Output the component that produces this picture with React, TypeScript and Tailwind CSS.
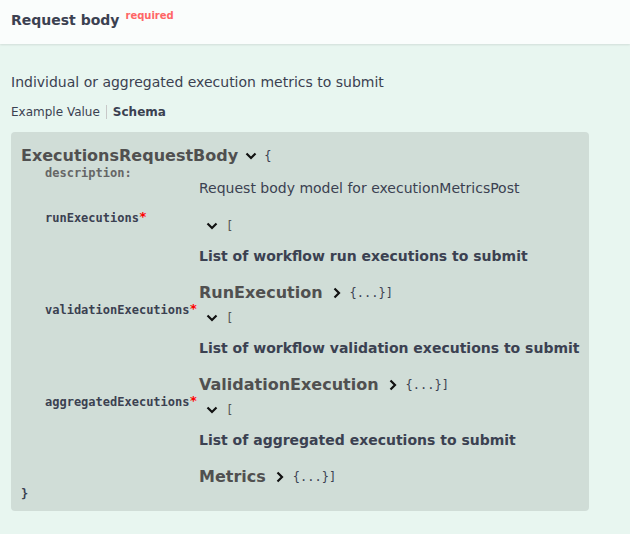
import React from 'react';

const sans = "font-['DejaVu_Sans',sans-serif]";
const mono = "font-['DejaVu_Sans_Mono',monospace]";

const ChevronDown = () => (
  <svg width="12" height="8" viewBox="0 0 12 8" className="inline-block">
    <polyline points="1.5,1.5 6,6 10.5,1.5" fill="none" stroke="#111" strokeWidth="2.2" />
  </svg>
);

const ChevronRight = () => (
  <svg width="8" height="12" viewBox="0 0 8 12" className="inline-block">
    <polyline points="1.5,1.5 6,6 1.5,10.5" fill="none" stroke="#111" strokeWidth="2.2" />
  </svg>
);

const ArrayRow: React.FC<{ name: string; desc: string; model: string }> = ({ name, desc, model }) => (
  <div className="flex h-[92px] pl-[24px]">
    <div className={`w-[154px] shrink-0 h-4 leading-4 text-[12px] font-semibold text-[#3b4151] ${mono}`}>
      {name}
      <span className="text-[red] text-[13px] font-bold relative -top-[1px]">*</span>
    </div>
    <div>
      <div className="mt-[8px] h-4 flex items-center pl-[7px]">
        <ChevronDown />
        <span className={`ml-[8px] text-[12px] text-[#555] ${mono}`}>[</span>
      </div>
      <div className={`mt-[12px] h-5 leading-5 text-[14px] font-bold text-[#3b4151] whitespace-nowrap ${sans}`}>{desc}</div>
      <div className="mt-[16px] h-[22px] flex items-center">
        <span className={`text-[16px] font-bold text-[#505050] ${sans}`}>{model}</span>
        <span className="ml-[10px] flex items-center"><ChevronRight /></span>
        <span className={`ml-[9px] text-[12px] text-[#3b4151] ${mono}`}>{'{...}]'}</span>
      </div>
    </div>
  </div>
);

export default function App() {
  return (
    <div className={`w-[630px] h-[534px] bg-[#e8f6f0] ${sans}`}>
      <div className="h-[44px] bg-[#fafdfc] shadow-[0_1px_2px_rgba(0,0,0,0.1)] pl-[11px] pt-[8px] relative">
        <span className="text-[14px] leading-5 font-bold text-[#3b4151]">Request body</span>
        <span className="ml-[6px] text-[10px] font-bold text-[#ff6666] relative -top-[6px]">required</span>
      </div>
      <div className="px-[11px] pt-[28px]">
        <div className="h-5 leading-5 text-[14px] text-[#3b4151]">Individual or aggregated execution metrics to submit</div>
        <div className="mt-[12px] h-4 flex items-center text-[12px] text-[#3b4151]">
          <span>Example Value</span>
          <span className="mx-[6px] w-px h-[14px] bg-[#c8c8c8]" />
          <span className="font-bold">Schema</span>
        </div>
        <div className="mt-[12px] w-[578px] rounded-[4px] bg-[rgba(0,0,0,0.1)] pt-[15px] pb-[9px] pl-[10px]">
          <div className="h-[18px] flex items-center">
            <span className="text-[16px] font-bold text-[#505050]">ExecutionsRequestBody</span>
            <span className="ml-[7px] flex items-center"><ChevronDown /></span>
            <span className={`ml-[7px] text-[12px] text-[#3b4151] ${mono}`}>{'{'}</span>
          </div>
          <div className="flex h-[45px] pl-[24px]">
            <div className={`w-[154px] shrink-0 h-4 leading-4 text-[12px] font-semibold text-[#666] ${mono}`}>description:</div>
            <div className="mt-[13px] h-[20px] leading-[20px] text-[14px] text-[#3b4151] whitespace-nowrap">Request body model for executionMetricsPost</div>
          </div>
          <ArrayRow name="runExecutions" desc="List of workflow run executions to submit" model="RunExecution" />
          <ArrayRow name="validationExecutions" desc="List of workflow validation executions to submit" model="ValidationExecution" />
          <ArrayRow name="aggregatedExecutions" desc="List of aggregated executions to submit" model="Metrics" />
          <div className={`h-4 leading-4 text-[12px] font-semibold text-[#3b4151] ${mono}`}>{'}'}</div>
        </div>
      </div>
    </div>
  );
}
